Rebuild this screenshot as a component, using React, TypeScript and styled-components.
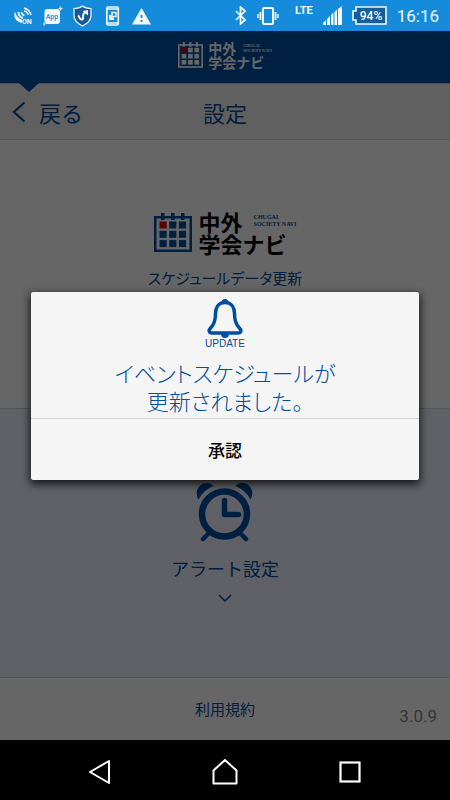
import React from "react";
import styled, { createGlobalStyle } from "styled-components";

const BLUE = "#004ea2";
const WHITE = "#f2f9ff";

const GlobalStyle = createGlobalStyle`
  * { box-sizing: border-box; }
  body {
    margin: 0;
    background: #000;
    font-family: "Noto Sans CJK JP", "Noto Sans", sans-serif;
  }
  svg { display: block; flex: none; }
`;

const PlainButton = styled.button`
  padding: 0;
  border: 0;
  background: none;
  font-family: inherit;
  cursor: pointer;
`;

const Screen = styled.div`
  min-height: 100vh;
  display: flex;
  flex-direction: column;
`;

const StatusBar = styled.header`
  height: 32px;
  padding: 0 11px 0 13px;
  display: flex;
  align-items: center;
  justify-content: space-between;
  background: #158cdb;
  border-bottom: 1px solid #0a1338;
  color: ${WHITE};
  font-family: Roboto, sans-serif;
`;

const StatusGroup = styled.div`
  display: flex;
  align-items: center;
  gap: 10px;
`;

const Network = styled.span`
  align-self: flex-start;
  margin-left: 6px;
  font-size: 11px;
  line-height: 14px;
  font-weight: 700;
`;

const Clock = styled.time`
  font-size: 17px;
  line-height: 24px;
`;

const AppArea = styled.div`
  flex: 1;
  position: relative;
  display: flex;
  flex-direction: column;
`;

const Page = styled.div`
  flex: 1;
  display: flex;
  flex-direction: column;
  background: #fff;
  color: ${BLUE};
`;

const BrandBar = styled.div`
  height: 51px;
  padding-bottom: 5px;
  display: flex;
  align-items: center;
  justify-content: center;
  background: ${BLUE};
`;

const TitleBar = styled.div`
  position: relative;
  height: 57px;
  padding: 0 12px;
  display: grid;
  grid-template-columns: 1fr auto 1fr;
  align-items: center;
  background: #f0f0f0;
  border-top: 1px solid #b8c4d4;
  border-bottom: 1px solid #cfcfcf;
`;

const Pointer = styled.svg`
  position: absolute;
  top: -1px;
  left: 19px;
`;

const BackButton = styled(PlainButton)`
  display: flex;
  align-items: center;
  gap: 13px;
  color: ${BLUE};
  font-size: 22px;
  line-height: 32px;
`;

const Title = styled.h1`
  margin: 0;
  font-size: 22px;
  line-height: 32px;
  font-weight: 400;
`;

const Section = styled.section<{ $tinted?: boolean }>`
  flex: 1 0 269px;
  display: flex;
  flex-direction: column;
  align-items: center;
  padding-top: ${(p) => (p.$tinted ? 74 : 70)}px;
  background: ${(p) => (p.$tinted ? "#eef2ff" : "#fff")};
  border-bottom: 1px solid #cfd2d8;
`;

const UpdateLabel = styled(PlainButton)`
  margin-top: 12px;
  color: ${BLUE};
  font-size: 15px;
  line-height: 24px;
  font-feature-settings: "palt";
`;

const AlertLabel = styled(PlainButton)`
  display: flex;
  flex-direction: column;
  align-items: center;
  gap: 12px;
  margin-top: 12px;
  color: ${BLUE};
  font-size: 18px;
  line-height: 28px;
`;

const Footer = styled.footer`
  height: 62px;
  padding: 0 13px;
  display: grid;
  grid-template-columns: 1fr auto 1fr;
  align-items: center;
`;

const Terms = styled.a`
  grid-column: 2;
  color: ${BLUE};
  font-size: 15px;
  line-height: 24px;
  text-decoration: none;
`;

const Version = styled.span`
  justify-self: end;
  padding-top: 14px;
  color: #888;
  font-family: Roboto, sans-serif;
  font-size: 17px;
  line-height: 20px;
`;

const Scrim = styled.div`
  position: absolute;
  inset: 0;
  padding: 0 31px;
  display: flex;
  align-items: center;
  justify-content: center;
  background: rgba(0, 0, 0, 0.6);
`;

const Dialog = styled.div`
  flex: 1;
  display: flex;
  flex-direction: column;
  background: #f5f5f5;
  border-radius: 2px;
  box-shadow: 0 3px 8px 1px rgba(0, 0, 0, 0.8);
`;

const DialogBody = styled.div`
  display: flex;
  flex-direction: column;
  align-items: center;
  padding: 7px 0 4px;
  color: ${BLUE};
`;

const UpdateTag = styled.span`
  font-family: "Liberation Sans", sans-serif;
  font-size: 10px;
  line-height: 12px;
`;

const Message = styled.p`
  margin: 8px 0 0;
  text-align: center;
  font-size: 22px;
  line-height: 28px;
  font-weight: 300;
  font-feature-settings: "palt";
`;

const Confirm = styled(PlainButton)`
  height: 62px;
  border-top: 1px solid #d2d2d2;
  color: #000;
  font-size: 17px;
  line-height: 24px;
  font-weight: 500;
`;

const NavBar = styled.nav`
  height: 60px;
  padding: 4px 37px 0;
  display: grid;
  grid-template-columns: repeat(3, 1fr);
  background: #000;
`;

const NavButton = styled(PlainButton)`
  display: flex;
  align-items: center;
  justify-content: center;
`;

const LogoRow = styled.div<{ $small?: boolean }>`
  display: flex;
  align-items: center;
  gap: ${(p) => (p.$small ? 5 : 7)}px;
  color: ${(p) => (p.$small ? "#fff" : "#000")};
`;

const LogoWords = styled.div<{ $small?: boolean }>`
  display: flex;
  flex-direction: column;
  font-weight: 700;
  font-size: ${(p) => (p.$small ? 14 : 22)}px;
  line-height: ${(p) => (p.$small ? 14 : 22)}px;
`;

const LogoTop = styled.div<{ $small?: boolean }>`
  display: flex;
  align-items: center;
  gap: ${(p) => (p.$small ? 7 : 11)}px;
`;

const LogoEnglish = styled.span<{ $small?: boolean }>`
  font-family: "Liberation Serif", serif;
  font-size: ${(p) => (p.$small ? 4 : 6)}px;
  line-height: ${(p) => (p.$small ? 5 : 7)}px;
  color: ${(p) => (p.$small ? "#fff" : BLUE)};
  white-space: nowrap;
`;

function Calendar({ width, height, color }: { width: number; height: number; color: string }) {
  const cells = [0, 1, 2].flatMap((r) => [0, 1, 2].map((c) => ({ r, c })));
  return (
    <svg width={width} height={height} viewBox="0 0 38 39" aria-hidden="true">
      <rect x="1.25" y="4.25" width="35.5" height="33.5" fill="none" stroke={color} strokeWidth="2.5" />
      {[7, 17, 27].map((x) => (
        <rect key={x} x={x} y="0" width="3.5" height="7" fill={color} />
      ))}
      {cells.map(({ r, c }) => (
        <rect
          key={`${r}${c}`}
          x={5.5 + c * 9.7}
          y={8.5 + r * 9.3}
          width="7.2"
          height="7"
          fill={r === 0 && c === 0 ? "#e60012" : color}
        />
      ))}
    </svg>
  );
}

function Logo({ small }: { small?: boolean }) {
  return (
    <LogoRow $small={small}>
      <Calendar width={small ? 25 : 38} height={small ? 26 : 39} color={small ? "#fff" : BLUE} />
      <LogoWords $small={small}>
        <LogoTop $small={small}>
          <span>中外</span>
          <LogoEnglish $small={small}>
            CHUGAI
            <br />
            SOCIETY NAVI
          </LogoEnglish>
        </LogoTop>
        <span>学会ナビ</span>
      </LogoWords>
    </LogoRow>
  );
}

const NotificationIcons = () => (
  <StatusGroup>
    <svg width="20" height="20" viewBox="0 0 20 20" fill="none" stroke={WHITE}>
      <path d="M2 5.500C0 11 3 15.500 8.500 17L9.500 14C5.500 12.500 3 10 2 5.500Z" fill={WHITE} stroke="none" />
      <path d="M5.500 6c0 3 2 5.500 4.500 6" strokeWidth="1.800" />
      <path d="M8.500 6c0 2 1 3 3 3.500" strokeWidth="1.600" />
      <path d="M11 2c4 1 6 3 7 7M11 5c2 0 4 2 4 4" strokeWidth="1.600" />
      <text x="9" y="18" fontSize="7" fontWeight="700" fill={WHITE} stroke="none">ON</text>
    </svg>
    <svg width="20" height="20" viewBox="0 0 20 20">
      <rect x="1.500" y="3" width="15.500" height="15" rx="3" fill={WHITE} />
      <path d="M17.500 0l.7 1.800 1.800.7-1.800.7-.7 1.800-.7-1.800-1.800-.7 1.800-.7zM1 16l.5 1.500L3 18l-1.500.5L1 20l-.6-1.500L0 18l.5-.5z" fill={WHITE} />
      <text x="9" y="13" fontSize="7" fontWeight="500" textAnchor="middle" fill="#158cdb">App</text>
    </svg>
    <svg width="19" height="22" viewBox="0 0 19 22">
      <path d="M9.500 1C7 3 4 3.500 1 3.500v7c0 5 3.500 8 8.500 10.500 5-2.500 8.500-5.500 8.500-10.500v-7c-3 0-6-.5-8.500-2.500Z" fill="#17599b" stroke={WHITE} strokeWidth="1.200" />
      <path d="M5 10.500c1.500.5 1 4.500 4 4 2.500-.5 0-3.500 1.500-5.500L12.500 7" fill="none" stroke={WHITE} strokeWidth="2" />
      <path d="M9.500 6l5.500-1v5.500z" fill={WHITE} />
    </svg>
    <svg width="20" height="20" viewBox="0 0 20 20" fill="none" stroke={WHITE}>
      <rect x="4.800" y="1" width="11.500" height="18" rx="1.500" strokeWidth="1.600" />
      <path d="M5 3h11M5 17h11" strokeWidth="1.500" />
      <rect x="10" y="6.500" width="4" height="4" strokeWidth="1.400" />
      <path d="M7 9h2.500v2.500H12V14H7z" fill={WHITE} stroke="none" />
    </svg>
    <svg width="19" height="18" viewBox="0 0 19 18">
      <path d="M9.500 1 19 17.500H0Z" fill={WHITE} />
      <path d="M9.500 8v3M9.500 13v2" stroke="#158cdb" strokeWidth="1.800" />
    </svg>
  </StatusGroup>
);

const SystemIcons = () => (
  <StatusGroup>
    <svg width="12" height="19" viewBox="0 0 12 19" fill="none" stroke={WHITE} strokeWidth="1.700">
      <path d="M1 5l9 9-4.500 4V1L10 5l-9 9" />
    </svg>
    <svg width="22" height="18" viewBox="0 0 22 18" fill="none" stroke={WHITE}>
      <rect x="6" y="1" width="10" height="16" rx="1" strokeWidth="2" />
      <path d="M3.500 5v8M18.500 5v8" strokeWidth="1.800" />
      <path d="M1 7v4M21 7v4" strokeWidth="1.500" />
    </svg>
    <Network>LTE</Network>
    <svg width="19" height="19" viewBox="0 0 19 19" fill={WHITE}>
      <path d="M0 19v-2l3-3v5zM4 19v-6l3-3v9zM8 19V9l2.500-2.500V19zM11.500 19V6L14 3.500V19zM15 19V3l4-3v19z" />
    </svg>
    <svg width="35" height="19" viewBox="0 0 35 19">
      <path d="M4 1h30v17H4v-4H1V5h3z" fill="#155f98" stroke={WHITE} strokeWidth="1.600" />
      <text x="19" y="14" fontSize="12" fontWeight="500" textAnchor="middle" fill={WHITE}>94%</text>
    </svg>
    <Clock>16:16</Clock>
  </StatusGroup>
);

const Alarm = () => (
  <svg width="58" height="59" viewBox="0 0 58 59" fill="none" stroke={BLUE} aria-hidden="true">
    <circle cx="28.500" cy="31" r="22.500" strokeWidth="6.500" />
    <path d="M28.500 17.500v14h14" strokeWidth="5.500" strokeLinecap="round" strokeLinejoin="round" />
    <path d="M13 50l-6 6M44 50l6 6" strokeWidth="4.500" strokeLinecap="round" />
    <path
      d="M2.500 16.500C-2.500 8 3.500 0 10.500 0C13.500 0 16 1 17.500 3C11 5.500 6 10 2.500 16.500ZM54.500 16.500C59.500 8 53.500 0 46.500 0C43.500 0 41 1 39.500 3C46 5.500 51 10 54.500 16.500Z"
      fill={BLUE}
      stroke="none"
    />
  </svg>
);

const Bell = () => (
  <svg width="36" height="39" viewBox="0 0 36 39" aria-hidden="true">
    <path
      d="M18 3.500C11.500 3.500 8.500 8.500 8.500 14.500C8.500 22 7 25.500 4 28.500C1 31.500 2 34 5 34H31C34 34 35 31.500 32 28.500C29 25.500 27.500 22 27.500 14.500C27.500 8.500 24.500 3.500 18 3.500Z"
      fill="none"
      stroke={BLUE}
      strokeWidth="3.500"
    />
    <path d="M14.500 3.500a3.500 3.500 0 0 1 7 0zM14 35h8a4 4 0 0 1-8 0z" fill={BLUE} />
  </svg>
);

export default function App() {
  return (
    <Screen>
      <GlobalStyle />
      <StatusBar>
        <NotificationIcons />
        <SystemIcons />
      </StatusBar>
      <AppArea>
        <Page>
          <BrandBar>
            <Logo small />
          </BrandBar>
          <TitleBar>
            <Pointer width="20" height="9" viewBox="0 0 20 9">
              <path d="M0 0h20L10 9z" fill={BLUE} />
            </Pointer>
            <BackButton type="button">
              <svg width="14" height="22" viewBox="0 0 14 22" fill="none" stroke={BLUE} strokeWidth="2.200">
                <path d="M12.500 1.500 2 11l10.500 9.500" />
              </svg>
              戻る
            </BackButton>
            <Title>設定</Title>
          </TitleBar>
          <Section>
            <Logo />
            <UpdateLabel type="button">スケジュールデータ更新</UpdateLabel>
          </Section>
          <Section $tinted>
            <Alarm />
            <AlertLabel type="button">
              アラート設定
              <svg width="14" height="9" viewBox="0 0 14 9" fill="none" stroke={BLUE} strokeWidth="1.500">
                <path d="M1 1l6 6 6-6" />
              </svg>
            </AlertLabel>
          </Section>
          <Footer>
            <Terms href="#terms">利用規約</Terms>
            <Version>3.0.9</Version>
          </Footer>
        </Page>
        <Scrim>
          <Dialog role="dialog" aria-modal="true" aria-labelledby="update-message">
            <DialogBody>
              <Bell />
              <UpdateTag>UPDATE</UpdateTag>
              <Message id="update-message">
                イベントスケジュールが
                <br />
                更新されました。
              </Message>
            </DialogBody>
            <Confirm type="button">承認</Confirm>
          </Dialog>
        </Scrim>
      </AppArea>
      <NavBar>
        <NavButton type="button" aria-label="Back">
          <svg width="22" height="24" viewBox="0 0 22 24" fill="none" stroke="#fff" strokeWidth="2" strokeLinejoin="round">
            <path d="M20 1v22L1 12z" />
          </svg>
        </NavButton>
        <NavButton type="button" aria-label="Home">
          <svg width="26" height="26" viewBox="0 0 26 26" fill="none" stroke="#fff" strokeWidth="2" strokeLinejoin="round">
            <path d="M13 1 24.500 11.500V24.500H1.500V11.500z" />
          </svg>
        </NavButton>
        <NavButton type="button" aria-label="Recent apps">
          <svg width="22" height="22" viewBox="0 0 22 22" fill="none" stroke="#fff" strokeWidth="2.200">
            <rect x="1.500" y="1.500" width="19" height="19" />
          </svg>
        </NavButton>
      </NavBar>
    </Screen>
  );
}
